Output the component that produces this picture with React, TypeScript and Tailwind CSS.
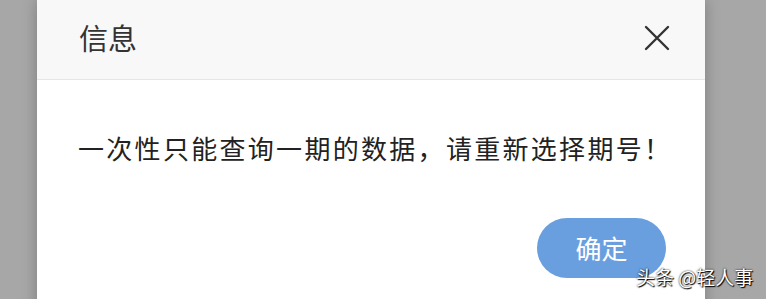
import React from "react";

export default function App() {
  return (
    <div className="w-[766px] h-[299px] overflow-hidden bg-[#a7a7a7] flex relative font-['Noto_Sans_CJK_SC','Noto_Sans',sans-serif]">
      <div className="ml-[37px] w-[668px] h-[320px] bg-white flex flex-col shadow-[0_0_14px_rgba(0,0,0,0.25)]">
        <div className="h-[80px] shrink-0 bg-[#f8f8f8] border-b border-[#e6e6e6] flex items-center justify-between pl-[42px] pr-[35px]">
          <span className="text-[29px] text-[#333] leading-none -mt-[4px]">信息</span>
          <svg width="26" height="26" viewBox="0 0 26 26" className="text-[#333] -mt-[3px]">
            <path d="M2 2 L24 24 M24 2 L2 24" stroke="currentColor" strokeWidth="2.4" strokeLinecap="round" />
          </svg>
        </div>
        <div className="pl-[41px] pt-[55px] text-[26px] tracking-[2.3px] text-[#222] leading-none whitespace-nowrap">
          一次性只能查询一期的数据，请重新选择期号！
        </div>
        <div className="flex justify-end pr-[39px] pt-[57px]">
          <button className="w-[129px] h-[60px] rounded-full bg-[#6a9fdf] text-white text-[26px] leading-none flex items-center justify-center">
            确定
          </button>
        </div>
      </div>
      <div className="absolute left-[636px] top-[267px] text-[19px] text-white leading-none [text-shadow:0_0_2px_#000,1px_1px_1px_#000]">
        头条 @轻人事
      </div>
    </div>
  );
}
